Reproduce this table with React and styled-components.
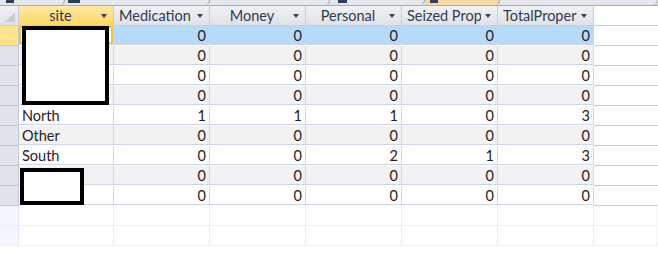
import React from "react";
import styled, { createGlobalStyle } from "styled-components";

const Global = createGlobalStyle`
  html, body { margin: 0; padding: 0; background: #fff; }
  body { font-family: Lato, "Open Sans", "Liberation Sans", sans-serif; }
`;

const cols = "19px 95px 96px 96px 96px 96px 96px 1fr";

const TabStrip = styled.div`
  height: 5px;
  background: #dde1e7;
  border-bottom: 1px solid #a7adb6;
  display: flex;
  overflow: hidden;
`;

const Tab = styled.div`
  width: ${(p) => p.w}px;
  height: 5px;
  background: ${(p) => (p.active ? "#f8d9a8" : "#e4e8ed")};
  border-right: 1px solid #9aa2ad;
  border-radius: 0 0 6px 0;
  position: relative;
`;

const TabIcon = styled.span`
  position: absolute;
  left: ${(p) => p.x}px;
  top: 0;
  width: ${(p) => p.w}px;
  height: 3px;
  background: #2f3d5a;
`;

const Grid = styled.div`
  position: relative;
  display: grid;
  grid-template-columns: ${cols};
`;

const HeadCell = styled.div`
  height: 19px;
  border-right: 1px solid #c9ced6;
  border-bottom: 1px solid #c9ced6;
  background: ${(p) =>
    p.active
      ? "linear-gradient(#ffe9a6, #fcd766)"
      : "linear-gradient(#f0f2f5, #dfe3e8)"};
  display: flex;
  align-items: center;
  padding: 0 4px 0 5px;
  font-size: 14.5px;
  color: #333a50;
  overflow: hidden;
  white-space: nowrap;
  position: relative;
`;

const HeadLabel = styled.span`
  flex: 1;
  text-align: ${(p) => (p.left ? "left" : "center")};
  overflow: hidden;
  margin-right: 4px;
`;

const Arrow = styled.span`
  width: 0;
  height: 0;
  border-left: 3.5px solid transparent;
  border-right: 3.5px solid transparent;
  border-top: 4px solid #3a3f4a;
  flex-shrink: 0;
  margin-right: 2px;
`;

const Corner = styled(HeadCell)`
  padding: 0;
  justify-content: flex-end;
  align-items: flex-end;
`;

const CornerMark = styled.span`
  width: 0;
  height: 0;
  border-left: 10px solid transparent;
  border-bottom: 10px solid #c7ccd3;
  margin: 0 3px 3px 0;
`;

const Blank = styled.div`
  height: 19px;
  border-bottom: 1px solid #c9ced6;
  background: #fff;
`;

const Selector = styled.div`
  height: 19px;
  border-right: 1px solid #c4cad3;
  border-bottom: 1px solid #c4cad3;
  background: ${(p) => (p.sel ? "#fde38a" : "#e0e4ea")};
`;

const Cell = styled.div`
  height: 19px;
  border-right: 1px solid #cdd6e6;
  border-bottom: 1px solid #cdd6e6;
  background: ${(p) => (p.sel ? "#b8daf9" : p.alt ? "#f2f2f2" : "#fff")};
  font-size: 14.5px;
  line-height: 19px;
  color: #1e1e24;
  padding: 0 3px;
  text-align: ${(p) => (p.num ? "right" : "left")};
  white-space: nowrap;
  overflow: hidden;
  box-sizing: border-box;
  ${(p) => p.focus && "box-shadow: inset 0 0 0 2px #f4c344; background: #fff;"}
`;

const EmptySel = styled.div`
  height: 19px;
  border-right: 1px solid #e6e9f1;
  border-bottom: 1px solid #eceff4;
  background: #f5f6fc;
`;

const EmptyCell = styled.div`
  height: 19px;
  border-right: 1px solid #eceff4;
  border-bottom: 1px solid #f0f1f4;
`;

const Redact = styled.div`
  position: absolute;
  left: ${(p) => p.x}px;
  top: ${(p) => p.y}px;
  width: ${(p) => p.w}px;
  height: ${(p) => p.h}px;
  border: 4px solid #000;
  background: #fff;
  box-sizing: border-box;
`;

const headers = [
  { label: "site", active: true },
  { label: "Medication", left: true },
  { label: "Money" },
  { label: "Personal" },
  { label: "Seized Property", left: true },
  { label: "TotalProperty", left: true },
];

const rows = [
  ["", 0, 0, 0, 0, 0],
  ["", 0, 0, 0, 0, 0],
  ["", 0, 0, 0, 0, 0],
  ["", 0, 0, 0, 0, 0],
  ["North", 1, 1, 1, 0, 3],
  ["Other", 0, 0, 0, 0, 0],
  ["South", 0, 0, 2, 1, 3],
  ["", 0, 0, 0, 0, 0],
  ["", 0, 0, 0, 0, 0],
];

export default function App() {
  return (
    <>
      <Global />
      <TabStrip>
        <Tab w={65}>
          <TabIcon x={6} w={8} />
        </Tab>
        <Tab w={145}>
          <TabIcon x={3} w={12} />
        </Tab>
        <Tab w={120} />
        <Tab w={95}>
          <TabIcon x={8} w={9} />
        </Tab>
        <Tab w={75} active>
          <TabIcon x={5} w={8} />
        </Tab>
        <Tab w={158} />
      </TabStrip>
      <Grid>
        <Corner>
          <CornerMark />
        </Corner>
        {headers.map((h) => (
          <HeadCell key={h.label} active={h.active}>
            <HeadLabel left={h.left}>{h.label}</HeadLabel>
            <Arrow />
          </HeadCell>
        ))}
        <Blank />
        {rows.map((r, i) => (
          <React.Fragment key={i}>
            <Selector sel={i === 0} />
            {r.map((v, j) => (
              <Cell
                key={j}
                num={j > 0}
                sel={i === 0}
                alt={i % 2 === 1}
                focus={i === 0 && j === 0}
              >
                {v}
              </Cell>
            ))}
            <Blank />
          </React.Fragment>
        ))}
        {[0, 1].map((i) => (
          <React.Fragment key={"e" + i}>
            <EmptySel />
            {[0, 1, 2, 3, 4, 5].map((j) => (
              <EmptyCell key={j} />
            ))}
            <EmptyCell />
          </React.Fragment>
        ))}
        <Redact x={22} y={20} w={87} h={79} />
        <Redact x={20} y={162} w={64} h={37} />
      </Grid>
    </>
  );
}
